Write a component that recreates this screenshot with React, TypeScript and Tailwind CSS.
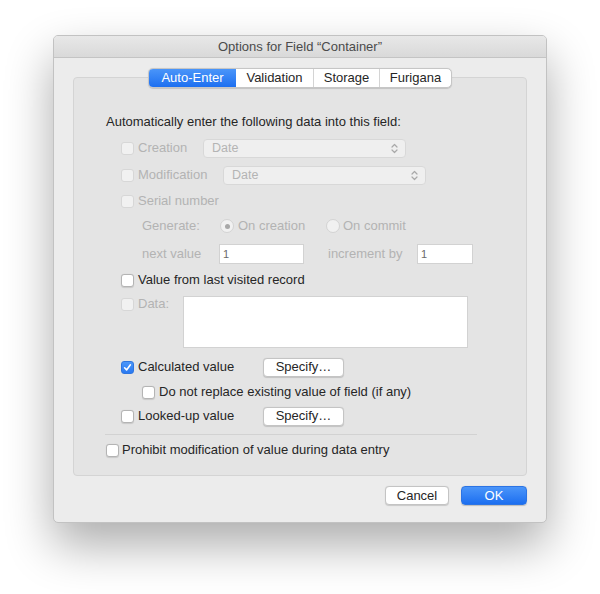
import React from "react";

const font = { fontFamily: '"Liberation Sans", Arial, sans-serif' };

function Checkbox({ checked = false, disabled = false }: { checked?: boolean; disabled?: boolean }) {
  if (checked) {
    return (
      <div className="w-[13px] h-[13px] rounded-[3px] bg-gradient-to-b from-[#4c97f9] to-[#2a79f1] border border-[#2f76e0] flex items-center justify-center shrink-0">
        <svg width="9" height="9" viewBox="0 0 9 9">
          <path d="M1.6 4.8 L3.6 6.9 L7.4 1.8" fill="none" stroke="#fff" strokeWidth="1.6" strokeLinecap="round" strokeLinejoin="round" />
        </svg>
      </div>
    );
  }
  return (
    <div
      className={
        disabled
          ? "w-[13px] h-[13px] rounded-[3px] bg-[#f1f1f1] border border-[#d7d7d7] shrink-0"
          : "w-[13px] h-[13px] rounded-[3px] bg-white border border-[#b4b4b4] shadow-[0_0.5px_1px_rgba(0,0,0,0.12)] shrink-0"
      }
    />
  );
}

function Radio({ selected = false }: { selected?: boolean }) {
  return (
    <div className="w-[14px] h-[14px] rounded-full bg-[#f1f1f1] border border-[#d3d3d3] flex items-center justify-center shrink-0">
      {selected && <div className="w-[5px] h-[5px] rounded-full bg-[#a8a8a8]" />}
    </div>
  );
}

function Dropdown({ width }: { width: string }) {
  return (
    <div className={`${width} h-[19px] rounded-[4px] bg-[#efefef] border border-[#d8d8d8] flex items-center justify-between pl-[8px] pr-[7px] text-[12.5px] text-[#b4b4b4]`}>
      <span>Date</span>
      <svg width="7" height="11" viewBox="0 0 7 11">
        <path d="M1 4 L3.5 1.5 L6 4" fill="none" stroke="#a9a9a9" strokeWidth="1.2" strokeLinecap="round" strokeLinejoin="round" />
        <path d="M1 7 L3.5 9.5 L6 7" fill="none" stroke="#a9a9a9" strokeWidth="1.2" strokeLinecap="round" strokeLinejoin="round" />
      </svg>
    </div>
  );
}

function SmallInput({ width }: { width: string }) {
  return (
    <div className={`${width} h-[20px] bg-white border border-[#d2d2d2] flex items-center pl-[3px] text-[11px] text-[#6a6a6a]`}>
      1
    </div>
  );
}

function Button({ children, width }: { children: React.ReactNode; width: string }) {
  return (
    <div className={`${width} h-[19px] rounded-[4px] bg-white border border-[#c4c4c4] shadow-[0_0.5px_1px_rgba(0,0,0,0.15)] flex items-center justify-center text-[13px] text-[#262626]`}>
      {children}
    </div>
  );
}

export default function App() {
  return (
    <div className="w-[600px] h-[594px] bg-white pt-[35px] pl-[53px]" style={font}>
      <div className="w-[494px] h-[488px] rounded-[5px] bg-[#ececec] border border-[#c2c2c2] shadow-[0_22px_48px_rgba(0,0,0,0.33)] flex flex-col overflow-hidden">
        {/* Title bar */}
        <div className="h-[22px] shrink-0 bg-gradient-to-b from-[#e8e8e8] to-[#d9d9d9] border-b border-[#c4c4c4] flex items-center justify-center pt-px text-[13px] text-[#4b4b4b]">
          Options for Field “Container”
        </div>

        <div className="px-[19px] pt-[10px] flex flex-col">
          {/* Tabs */}
          <div className="relative z-10 flex justify-center">
            <div className="flex h-[20px] rounded-[5px] border border-[#c6c6c6] bg-white shadow-[0_0.5px_1px_rgba(0,0,0,0.15)] text-[13px] text-[#262626] overflow-hidden">
              <div className="w-[87px] flex items-center justify-center bg-gradient-to-b from-[#4a95f9] to-[#1c6ff0] text-white">Auto-Enter</div>
              <div className="w-[78px] flex items-center justify-center border-r border-[#d4d4d4]">Validation</div>
              <div className="w-[66px] flex items-center justify-center border-r border-[#d4d4d4]">Storage</div>
              <div className="w-[71px] flex items-center justify-center">Furigana</div>
            </div>
          </div>

          {/* Tab box */}
          <div className="-mt-[11px] h-[399px] rounded-[4px] bg-[#e4e4e4] border border-[#d4d4d4] pl-[32px] pt-[34px] flex flex-col text-[13px] text-[#262626]">
            <div className="h-[20px] flex items-center">Automatically enter the following data into this field:</div>

            {/* Creation */}
            <div className="mt-[6px] h-[20px] flex items-center pl-[15px]">
              <div className="w-[82px] flex items-center gap-[4px] text-[#b3b3b3]">
                <Checkbox disabled />
                <span>Creation</span>
              </div>
              <Dropdown width="w-[203px]" />
            </div>

            {/* Modification */}
            <div className="mt-[7px] h-[20px] flex items-center pl-[15px]">
              <div className="w-[102px] flex items-center gap-[4px] text-[#b3b3b3]">
                <Checkbox disabled />
                <span>Modification</span>
              </div>
              <Dropdown width="w-[203px]" />
            </div>

            {/* Serial number */}
            <div className="mt-[6px] h-[20px] flex items-center pl-[15px] gap-[4px] text-[#b3b3b3]">
              <Checkbox disabled />
              <span>Serial number</span>
            </div>

            {/* Generate */}
            <div className="mt-[5px] h-[20px] flex items-center pl-[36px] text-[#b3b3b3]">
              <div className="w-[78px]">Generate:</div>
              <div className="w-[106px] flex items-center gap-[4px]">
                <Radio selected />
                <span>On creation</span>
              </div>
              <div className="flex items-center gap-[3px]">
                <Radio />
                <span>On commit</span>
              </div>
            </div>

            {/* next value */}
            <div className="mt-[8px] h-[20px] flex items-center pl-[36px] text-[#b3b3b3]">
              <div className="w-[77px]">next value</div>
              <SmallInput width="w-[85px]" />
              <div className="ml-[24px] w-[89px]">increment by</div>
              <SmallInput width="w-[56px]" />
            </div>

            {/* Value from last visited record */}
            <div className="mt-[6px] h-[20px] flex items-center pl-[15px] gap-[4px]">
              <Checkbox />
              <span>Value from last visited record</span>
            </div>

            {/* Data */}
            <div className="mt-[6px] flex items-start pl-[15px]">
              <div className="w-[62px] h-[16px] flex items-center gap-[4px] text-[#b3b3b3]">
                <Checkbox disabled />
                <span>Data:</span>
              </div>
              <div className="w-[285px] h-[52px] bg-white border border-[#d2d2d2]" />
            </div>

            {/* Calculated value */}
            <div className="mt-[9px] h-[20px] flex items-center pl-[15px]">
              <div className="w-[142px] flex items-center gap-[4px]">
                <Checkbox checked />
                <span>Calculated value</span>
              </div>
              <Button width="w-[81px]">Specify…</Button>
            </div>

            {/* Do not replace */}
            <div className="mt-[5px] h-[20px] flex items-center pl-[36px] gap-[4px]">
              <Checkbox />
              <span>Do not replace existing value of field (if any)</span>
            </div>

            {/* Looked-up value */}
            <div className="mt-[4px] h-[20px] flex items-center pl-[15px]">
              <div className="w-[142px] flex items-center gap-[4px]">
                <Checkbox />
                <span>Looked-up value</span>
              </div>
              <Button width="w-[81px]">Specify…</Button>
            </div>

            <div className="mt-[8px] h-px w-[372px] -ml-px bg-[#d2d2d2]" />

            {/* Prohibit */}
            <div className="mt-[5px] h-[20px] flex items-center gap-[3px]">
              <Checkbox />
              <span>Prohibit modification of value during data entry</span>
            </div>
          </div>

          {/* Footer buttons */}
          <div className="mt-[10px] flex justify-end gap-[12px]">
            <Button width="w-[64px]">Cancel</Button>
            <div className="w-[66px] h-[19px] rounded-[4px] bg-gradient-to-b from-[#4a95f9] to-[#1b6ef0] border border-[#2c74e4] shadow-[0_0.5px_1px_rgba(0,0,0,0.2)] flex items-center justify-center text-[13px] text-white">
              OK
            </div>
          </div>
        </div>
      </div>
    </div>
  );
}
